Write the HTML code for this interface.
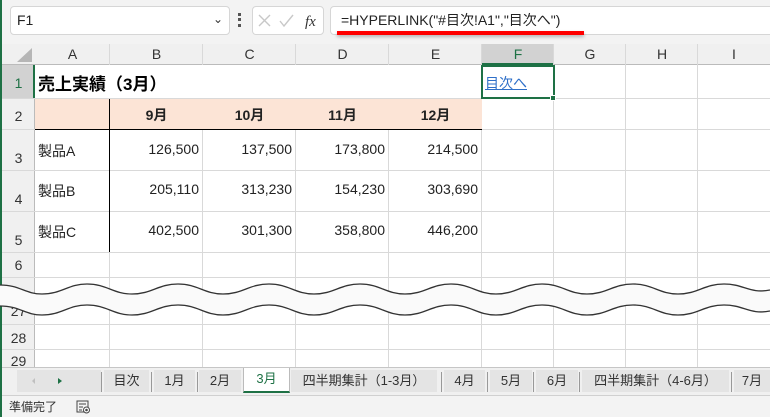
<!DOCTYPE html>
<html><head><meta charset="utf-8"><style>
*{margin:0;padding:0;box-sizing:border-box}
body{width:770px;height:417px;overflow:hidden;background:#fff;font-family:"Liberation Sans","Noto Sans CJK JP",sans-serif;position:relative;color:#222}
.a{position:absolute}
.hdr{background:#f0f0f0;color:#333;font-size:14px;text-align:center}
.vl{position:absolute;width:1px;background:#d9d9d9}
.hl{position:absolute;height:1px;background:#d9d9d9}
.num{position:absolute;font-size:14px;text-align:right;width:90px}
.tab{position:absolute;top:370px;height:22px;background:#e4e4e4;font-size:13px;color:#333;text-align:center;line-height:22px}
.sep{position:absolute;top:372px;width:1px;height:20px;background:#999}
</style></head><body>
<div class="a" style="left:0;top:0;width:770px;height:44px;background:#f3f3f3"></div>
<div class="a" style="left:10px;top:6px;width:220px;height:29px;background:#fff;border:1px solid #d6d6d6;border-radius:4px;font-size:14px;line-height:27px;padding-left:6px">F1</div>
<div class="a" style="left:213px;top:12px;font-size:12px;color:#333">&#8964;</div>
<div class="a" style="left:238px;top:13px;width:3px;height:14px;border-left:3px dotted #555"></div>
<div class="a" style="left:252px;top:6px;width:72px;height:29px;background:#fff;border:1px solid #d6d6d6;border-radius:4px"></div>
<svg class="a" style="left:252px;top:6px" width="72" height="29"><path d="M7 9l11 11M18 9L7 20" stroke="#c8c8c8" stroke-width="1.4"/><path d="M28 15l4 5 9-11" stroke="#c8c8c8" stroke-width="1.4" fill="none"/><text x="53" y="20" font-family="Liberation Serif" font-style="italic" font-size="15" fill="#333">fx</text></svg>
<div class="a" style="left:330px;top:6px;width:445px;height:29px;background:#fff;border:1px solid #d6d6d6;border-radius:4px;font-size:14px;line-height:27px;padding-left:10px;color:#222">=HYPERLINK("#目次!A1","目次へ")</div>
<div class="a" style="left:337px;top:31px;width:247px;height:4px;background:#f00;box-shadow:0 2px 3px rgba(0,0,0,.25)"></div>
<div class="a" style="left:0;top:0;width:2px;height:417px;background:#1e7145"></div>
<div class="a hdr" style="left:2px;top:44px;width:768px;height:21px;border-bottom:1px solid #bbb"></div>
<svg class="a" style="left:15px;top:47px" width="18" height="16"><path d="M17 1V15H2Z" fill="#b6b6b6"/></svg>
<div class="a hdr" style="left:482px;top:44px;width:72px;height:21px;background:#d2d2d2;border-bottom:2px solid #1e7145"></div>
<div class="a" style="top:44px;left:0;width:770px;height:21px;font-size:14px;color:#333;line-height:21px">
<span class="a" style="left:35px;width:75px;text-align:center">A</span><span class="a" style="left:110px;width:93px;text-align:center">B</span><span class="a" style="left:203px;width:93px;text-align:center">C</span><span class="a" style="left:296px;width:93px;text-align:center">D</span><span class="a" style="left:389px;width:93px;text-align:center">E</span><span class="a" style="left:482px;width:72px;text-align:center;color:#1e7145">F</span><span class="a" style="left:554px;width:72px;text-align:center">G</span><span class="a" style="left:626px;width:72px;text-align:center">H</span><span class="a" style="left:698px;width:72px;text-align:center">I</span></div>
<div class="a hdr" style="left:2px;top:65px;width:33px;height:302px;border-right:1px solid #bbb"></div>
<div class="a hdr" style="left:2px;top:65px;width:33px;height:33px;background:#d2d2d2;border-right:2px solid #1e7145"></div>
<div class="hl" style="left:2px;top:98px;width:768px"></div>
<div class="hl" style="left:2px;top:129px;width:768px"></div>
<div class="hl" style="left:2px;top:170px;width:768px"></div>
<div class="hl" style="left:2px;top:211px;width:768px"></div>
<div class="hl" style="left:2px;top:252px;width:768px"></div>
<div class="hl" style="left:2px;top:277px;width:768px"></div>
<div class="hl" style="left:2px;top:324px;width:768px"></div>
<div class="hl" style="left:2px;top:349px;width:768px"></div>
<div class="vl" style="left:109px;top:44px;height:323px"></div>
<div class="vl" style="left:202px;top:44px;height:323px"></div>
<div class="vl" style="left:295px;top:44px;height:323px"></div>
<div class="vl" style="left:388px;top:44px;height:323px"></div>
<div class="vl" style="left:481px;top:44px;height:323px"></div>
<div class="vl" style="left:553px;top:44px;height:323px"></div>
<div class="vl" style="left:625px;top:44px;height:323px"></div>
<div class="vl" style="left:697px;top:44px;height:323px"></div>
<div class="a" style="left:35px;top:65px;width:447px;height:33px;background:#fff"></div>
<div class="a" style="left:35px;top:99px;width:447px;height:30px;background:#fce4d6"></div>
<div class="a" style="left:35px;top:129px;width:447px;height:1px;background:#000"></div>
<div class="a" style="left:109px;top:99px;width:1px;height:153px;background:#000"></div>
<div class="a" style="left:2px;width:33px;font-size:14px;color:#333;text-align:center">
<div class="a" style="left:0;width:33px;top:75px;color:#1e7145">1</div>
<div class="a" style="left:0;width:33px;top:108px">2</div>
<div class="a" style="left:0;width:33px;top:150px">3</div>
<div class="a" style="left:0;width:33px;top:191px">4</div>
<div class="a" style="left:0;width:33px;top:232px">5</div>
<div class="a" style="left:0;width:33px;top:257px">6</div>
<div class="a" style="left:0;width:33px;top:303px">27</div>
<div class="a" style="left:0;width:33px;top:330px">28</div>
<div class="a" style="left:0;width:33px;top:353px">29</div>
</div>
<div class="a" style="left:38px;top:70px;font-size:17px;font-weight:bold;color:#000">売上実績（3月）</div>
<div class="a" style="left:110px;top:105px;width:93px;text-align:center;font-size:14px;font-weight:bold">9月</div>
<div class="a" style="left:203px;top:105px;width:93px;text-align:center;font-size:14px;font-weight:bold">10月</div>
<div class="a" style="left:296px;top:105px;width:93px;text-align:center;font-size:14px;font-weight:bold">11月</div>
<div class="a" style="left:389px;top:105px;width:93px;text-align:center;font-size:14px;font-weight:bold">12月</div>
<div class="a" style="left:38px;top:141px;font-size:14px">製品A</div>
<div class="a" style="left:38px;top:181px;font-size:14px">製品B</div>
<div class="a" style="left:38px;top:222px;font-size:14px">製品C</div>
<div class="num" style="left:109px;top:141px">126,500</div><div class="num" style="left:202px;top:141px">137,500</div><div class="num" style="left:295px;top:141px">173,800</div><div class="num" style="left:388px;top:141px">214,500</div>
<div class="num" style="left:109px;top:181px">205,110</div><div class="num" style="left:202px;top:181px">313,230</div><div class="num" style="left:295px;top:181px">154,230</div><div class="num" style="left:388px;top:181px">303,690</div>
<div class="num" style="left:109px;top:222px">402,500</div><div class="num" style="left:202px;top:222px">301,300</div><div class="num" style="left:295px;top:222px">358,800</div><div class="num" style="left:388px;top:222px">446,200</div>
<div class="a" style="left:481px;top:65px;width:74px;height:34px;border:2px solid #1e7145"></div>
<div class="a" style="left:550px;top:95px;width:6px;height:6px;background:#1e7145;border:1px solid #fff"></div>
<div class="a" style="left:485px;top:73px;font-size:14px;color:#2e6fc8;text-decoration:underline">目次へ</div>
<svg class="a" style="left:0;top:278px" width="770" height="45">
<path d="M0 7 C20 7 25 16 42 16 C62 16 68 6 87 6 C107 6 113 16 132 16 C152 16 158 6 178 6 C198 6 204 16 223 16 C243 16 249 6 269 6 C289 6 295 16 314 16 C334 16 340 6 360 6 C380 6 386 16 405 16 C425 16 431 6 451 6 C471 6 477 16 496 16 C516 16 522 6 542 6 C562 6 568 16 587 16 C607 16 613 6 633 6 C653 6 659 16 678 16 C698 16 704 6 724 6 C744 6 750 16 770 12 L770 33 C750 37 744 27 724 27 C704 27 698 37 678 37 C659 37 653 27 633 27 C613 27 607 37 587 37 C568 37 562 27 542 27 C522 27 516 37 496 37 C477 37 471 27 451 27 C431 27 425 37 405 37 C386 37 380 27 360 27 C340 27 334 37 314 37 C295 37 289 27 269 27 C249 27 243 37 223 37 C204 37 198 27 178 27 C158 27 152 37 132 37 C113 37 107 27 87 27 C68 27 62 37 42 37 C25 37 20 28 0 28 Z" fill="#fafafa"/>
<path d="M0 7 C20 7 25 16 42 16 C62 16 68 6 87 6 C107 6 113 16 132 16 C152 16 158 6 178 6 C198 6 204 16 223 16 C243 16 249 6 269 6 C289 6 295 16 314 16 C334 16 340 6 360 6 C380 6 386 16 405 16 C425 16 431 6 451 6 C471 6 477 16 496 16 C516 16 522 6 542 6 C562 6 568 16 587 16 C607 16 613 6 633 6 C653 6 659 16 678 16 C698 16 704 6 724 6 C744 6 750 16 770 12" fill="none" stroke="#333" stroke-width="1.3"/>
<path d="M0 28 C20 28 25 37 42 37 C62 37 68 27 87 27 C107 27 113 37 132 37 C152 37 158 27 178 27 C198 27 204 37 223 37 C243 37 249 27 269 27 C289 27 295 37 314 37 C334 37 340 27 360 27 C380 27 386 37 405 37 C425 37 431 27 451 27 C471 27 477 37 496 37 C516 37 522 27 542 27 C562 27 568 37 587 37 C607 37 613 27 633 27 C653 27 659 37 678 37 C698 37 704 27 724 27 C744 27 750 37 770 33" fill="none" stroke="#333" stroke-width="1.3"/>
</svg>
<div class="a" style="left:2px;top:367px;width:768px;height:28px;background:#f0f0f0;border-top:1px solid #c6c6c6"></div>
<div class="a" style="left:17px;top:370px;width:84px;height:22px;background:#e4e4e4"></div>
<svg class="a" style="left:28px;top:375px" width="40" height="12"><path d="M4 6l3-3v6z" fill="#c0c0c0"/><path d="M30 3l4 3-4 3z" fill="#1e7145"/></svg>
<div class="sep" style="left:101px"></div>
<div class="tab" style="left:104px;width:45px">目次</div><div class="sep" style="left:151px"></div>
<div class="tab" style="left:154px;width:41px">1月</div><div class="sep" style="left:197px"></div>
<div class="tab" style="left:199px;width:42px">2月</div>
<div class="tab" style="left:243px;width:47px;background:#fff;color:#1e7145;top:368px;height:25px;border-bottom:2px solid #1e7145;border-left:1px solid #bbb;border-right:1px solid #bbb">3月</div>
<div class="tab" style="left:291px;width:146px">四半期集計（1-3月）</div><div class="sep" style="left:441px"></div>
<div class="tab" style="left:444px;width:41px">4月</div><div class="sep" style="left:487px"></div>
<div class="tab" style="left:490px;width:42px">5月</div><div class="sep" style="left:533px"></div>
<div class="tab" style="left:536px;width:42px">6月</div><div class="sep" style="left:579px"></div>
<div class="tab" style="left:582px;width:147px">四半期集計（4-6月）</div><div class="sep" style="left:731px"></div>
<div class="tab" style="left:734px;width:36px">7月</div>
<div class="a" style="left:2px;top:395px;width:768px;height:22px;background:#f3f3f3;border-top:1px solid #d0d0d0"></div>
<div class="a" style="left:9px;top:398px;font-size:12px;color:#333">準備完了</div>
<svg class="a" style="left:76px;top:400px" width="15" height="14"><rect x="1" y="1" width="11" height="11" fill="none" stroke="#444"/><path d="M3 4h7M3 7h4M3 10h3" stroke="#444"/><circle cx="10.5" cy="10" r="3" fill="#fff" stroke="#444"/><circle cx="10.5" cy="10" r="1.3" fill="#444"/></svg>
</body></html>
